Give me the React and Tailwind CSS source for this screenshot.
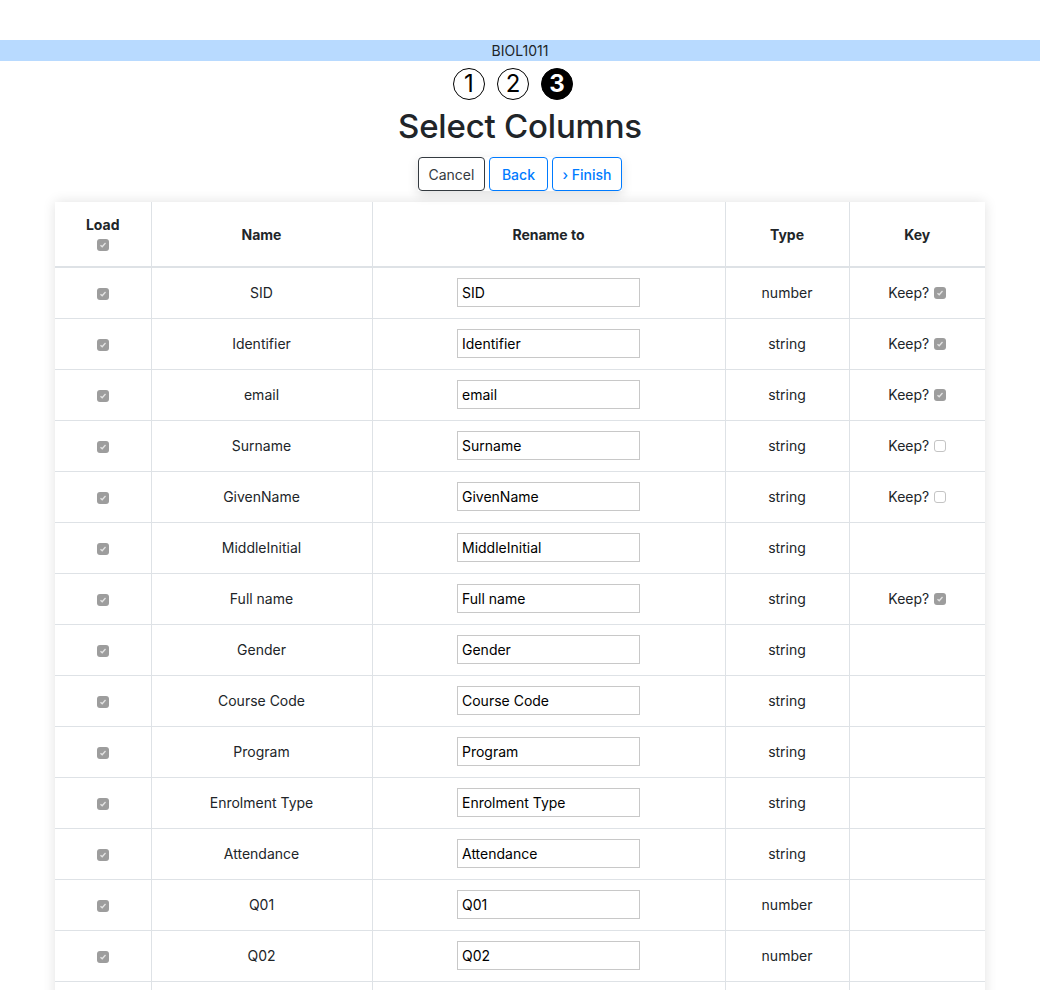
const rows = [
  { name: 'SID', type: 'number', keep: true },
  { name: 'Identifier', type: 'string', keep: true },
  { name: 'email', type: 'string', keep: true },
  { name: 'Surname', type: 'string', keep: false },
  { name: 'GivenName', type: 'string', keep: false },
  { name: 'MiddleInitial', type: 'string' },
  { name: 'Full name', type: 'string', keep: true },
  { name: 'Gender', type: 'string' },
  { name: 'Course Code', type: 'string' },
  { name: 'Program', type: 'string' },
  { name: 'Enrolment Type', type: 'string' },
  { name: 'Attendance', type: 'string' },
  { name: 'Q01', type: 'number' },
  { name: 'Q02', type: 'number' },
  { name: 'Q03', type: 'number' },
  { name: 'Q04', type: 'number' },
];

const Box = ({ checked }) =>
  checked ? (
    <span className="inline-flex w-[12px] h-[12px] rounded-[3px] bg-[#9d9d9d] items-center justify-center align-middle">
      <svg width="8" height="8" viewBox="0 0 8 8">
        <path d="M1.5 4.2 L3.2 5.8 L6.5 2" fill="none" stroke="#e4e4e4" strokeWidth="1.3" />
      </svg>
    </span>
  ) : (
    <span className="inline-block w-[12px] h-[12px] rounded-[3px] border border-[#c4c4c4] bg-white align-middle" />
  );

const Step = ({ n, active }) => (
  <span
    className={`flex items-center justify-center w-[32px] h-[32px] rounded-full border-[1.5px] border-black text-[24px] leading-none ${
      active ? 'bg-black text-white font-bold' : 'bg-white text-black'
    }`}
  >
    {n}
  </span>
);

export default function App() {
  return (
    <div className="min-h-screen bg-white text-[#212529] pt-[40px] font-['Inter','Liberation_Sans',sans-serif]">
      {/* course bar */}
      <div className="h-[21px] bg-[#b8daff] text-center text-[14px] leading-[21px]">BIOL1011</div>

      {/* steps */}
      <div className="flex justify-center gap-[12px] h-[46px] items-center pr-[14px]">
        <Step n="1" />
        <Step n="2" />
        <Step n="3" active />
      </div>

      <h2 className="text-center text-[33px] font-medium leading-[38px] tracking-[-0.2px]">Select Columns</h2>

      <div className="flex justify-center mt-[12px]">
        <div className="flex gap-[4px] shadow-[0_4px_12px_rgba(0,0,0,0.12)]">
          <button className="h-[34px] px-[9.5px] rounded-[4px] border border-[#343a40] text-[14px] text-[#343a40]">Cancel</button>
          <button className="h-[34px] px-[12px] rounded-[4px] border border-[#007bff] text-[14px] font-medium text-[#007bff]">Back</button>
          <button className="h-[34px] px-[9.5px] rounded-[4px] border border-[#007bff] text-[14px] font-medium text-[#007bff]">› Finish</button>
        </div>
      </div>

      <div className="mx-[55px] mt-[11px] shadow-[0_0_12px_rgba(0,0,0,0.12)]">
        <table className="w-full border-collapse text-[14px] text-center">
          <thead>
            <tr className="border-b-2 border-[#dee2e6]">
              <th className="w-[96px] h-[65px] border border-t-0 border-l-0 border-[#dee2e6] font-bold align-middle">
                <div className="leading-[20px]">Load</div>
                <div className="leading-[18px]"><Box checked /></div>
              </th>
              <th className="w-[221px] border-r border-[#dee2e6] font-bold">Name</th>
              <th className="w-[353px] border-r border-[#dee2e6] font-bold">Rename to</th>
              <th className="w-[124px] border-r border-[#dee2e6] font-bold">Type</th>
              <th className="w-[136px] font-bold">Key</th>
            </tr>
          </thead>
          <tbody>
            {rows.map((r) => (
              <tr key={r.name} className="h-[51px] border-b border-[#dee2e6]">
                <td className="border-r border-[#dee2e6]"><Box checked /></td>
                <td className="border-r border-[#dee2e6]">{r.name}</td>
                <td className="border-r border-[#dee2e6]">
                  <input
                    readOnly
                    value={r.name}
                    className="w-[183px] h-[29px] px-[4px] border border-[#c8c8c8] text-[14px] text-black outline-none"
                  />
                </td>
                <td className="border-r border-[#dee2e6]">{r.type}</td>
                <td>
                  {r.keep !== undefined && (
                    <span className="inline-flex items-center gap-[5px]">
                      Keep? <Box checked={r.keep} />
                    </span>
                  )}
                </td>
              </tr>
            ))}
          </tbody>
        </table>
      </div>
    </div>
  );
}
